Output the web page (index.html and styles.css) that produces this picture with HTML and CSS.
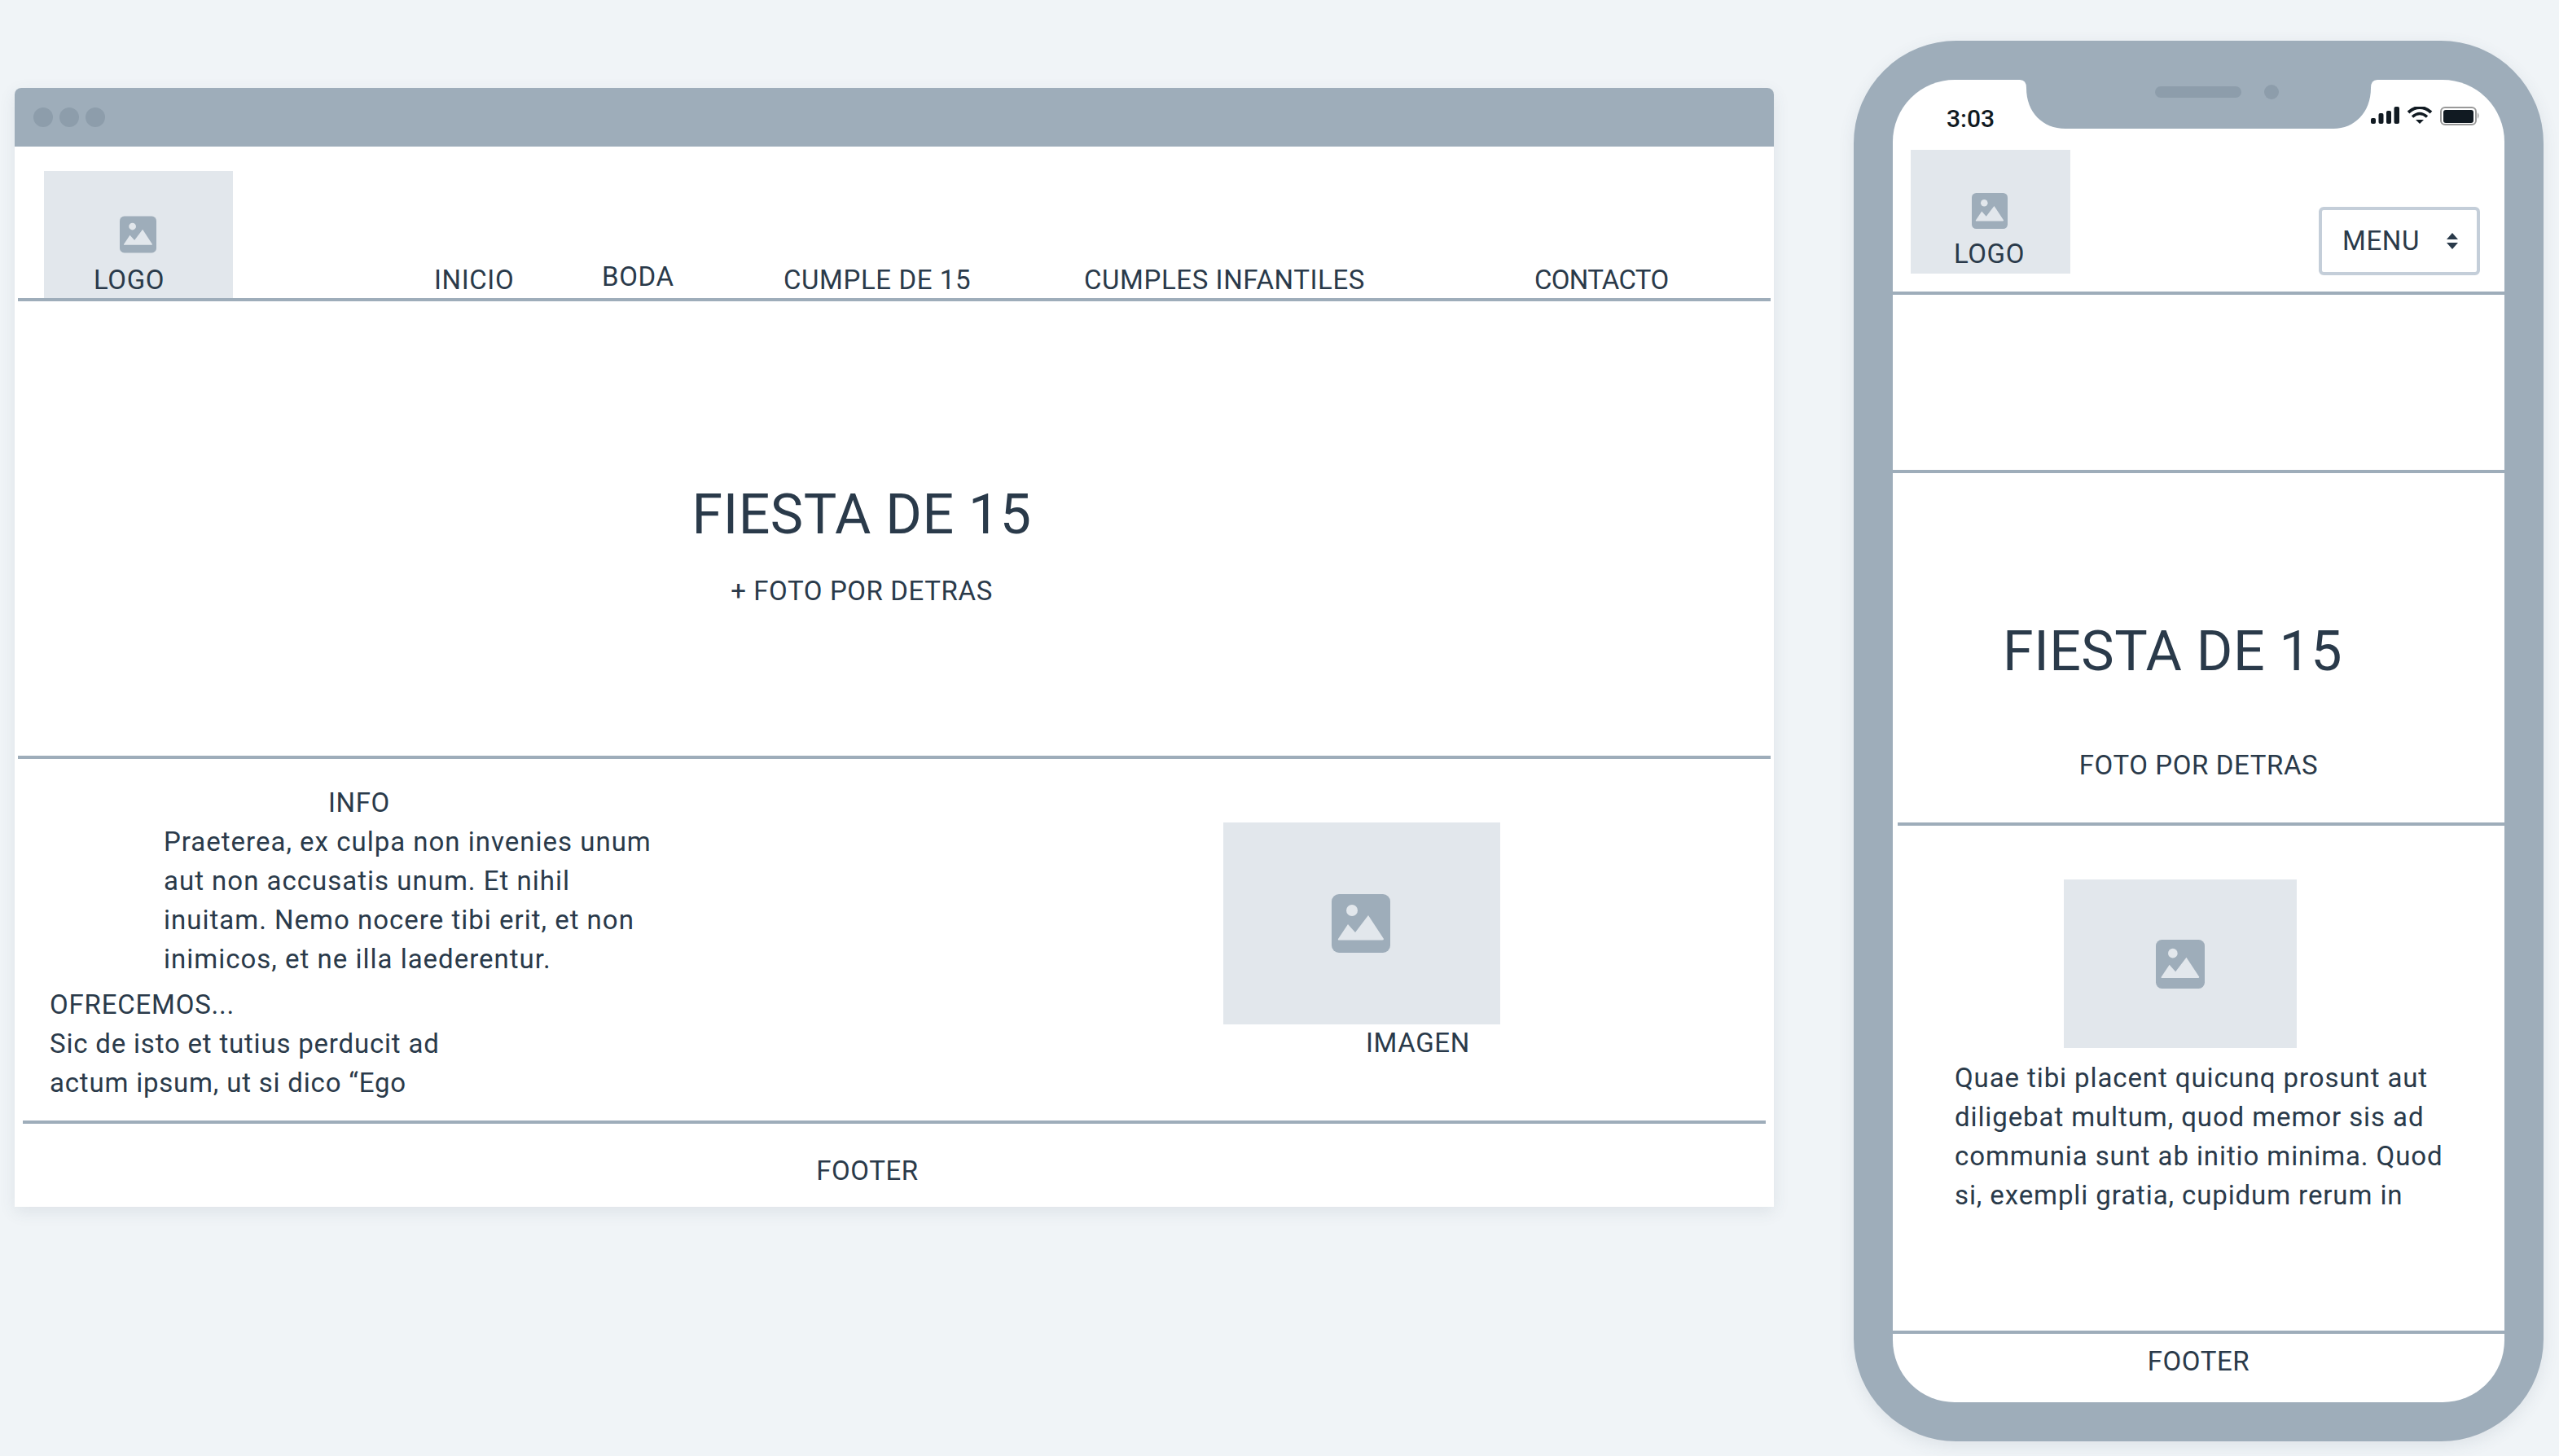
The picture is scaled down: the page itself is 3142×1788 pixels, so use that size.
FILE: index.html
```html
<!DOCTYPE html>
<html lang="en">
<head>
    <meta charset="UTF-8">
    <meta name="viewport" content="width=device-width, initial-scale=1.0">
    <title>Fiesta de 15 wireframe</title>
    <link rel="stylesheet" href="styles.css">
</head>
<body>
    <svg class="defs" width="0" height="0">
        <symbol id="img-icon" viewBox="0 0 72 72">
            <rect width="72" height="72" rx="9" fill="#9eadba"/>
            <circle cx="25" cy="20" r="7" fill="#e2e7ec"/>
            <path d="M8 55 L20 37 L29 47 L45 26 L64 55 Q64 56.500 62 56.500 H10 Q7 56.500 8 55 Z" fill="#e2e7ec"/>
        </symbol>
    </svg>

    <div class="browser">
        <div class="browser-bar">
            <span class="dot"></span>
            <span class="dot"></span>
            <span class="dot"></span>
        </div>
        <header class="site-header">
            <div class="logo">
                <svg class="logo-icon"><use href="#img-icon"/></svg>
                <span class="logo-label">LOGO</span>
            </div>
            <span class="nav-item">INICIO</span>
            <span class="nav-item nav-raised">BODA</span>
            <span class="nav-item">CUMPLE DE 15</span>
            <span class="nav-item">CUMPLES INFANTILES</span>
            <span class="nav-item nav-tight">CONTACTO</span>
        </header>
        <div class="rule"></div>
        <section class="hero">
            <h1>FIESTA DE 15</h1>
            <p>+ FOTO POR DETRAS</p>
        </section>
        <div class="rule"></div>
        <section class="info">
            <div class="info-text">
                <p class="info-title">INFO</p>
                <p class="info-body">Praeterea, ex culpa non invenies unum<br>aut non accusatis unum. Et nihil<br>inuitam. Nemo nocere tibi erit, et non<br>inimicos, et ne illa laederentur.</p>
                <p class="info-offer">OFRECEMOS...<br>Sic de isto et tutius perducit ad<br>actum ipsum, ut si dico “Ego</p>
            </div>
            <div class="info-image">
                <div class="placeholder">
                    <svg class="placeholder-icon"><use href="#img-icon"/></svg>
                </div>
                <p class="image-label">IMAGEN</p>
            </div>
        </section>
        <div class="rule rule-short"></div>
        <footer class="site-footer">FOOTER</footer>
    </div>

    <div class="phone">
        <div class="screen">
            <svg class="notch" viewBox="0 0 439 60">
                <path d="M0 0 H439 Q431 0 431 10 C431 40 411 60 385 60 H56 C28 60 8 40 8 10 Q8 0 0 0 Z" fill="#9eadba"/>
                <rect x="166" y="8" width="106" height="14" rx="7" fill="#8d9dab"/>
                <circle cx="309" cy="15" r="9" fill="#8d9dab"/>
            </svg>
            <div class="status-bar">
                <span class="time">3:03</span>
                <svg class="status-icons" viewBox="0 0 134 24">
                    <rect x="0" y="14" width="6" height="7" rx="2" fill="#111a22"/>
                    <rect x="9.500" y="8" width="6" height="13" rx="2" fill="#111a22"/>
                    <rect x="19" y="5" width="6" height="16" rx="2" fill="#111a22"/>
                    <rect x="28.500" y="0" width="6.500" height="21" rx="2" fill="#111a22"/>
                    <path d="M46 7 Q60 -5 74 7" fill="none" stroke="#111a22" stroke-width="4"/>
                    <path d="M51 12.500 Q60 4.500 69 12.500" fill="none" stroke="#111a22" stroke-width="3.500"/>
                    <path d="M55 16 H65 L60 21 Z" fill="#111a22"/>
                    <rect x="86" y="1" width="43" height="21" rx="5" fill="none" stroke="#999" stroke-width="2"/>
                    <rect x="89" y="4" width="37" height="16" rx="3" fill="#111a22"/>
                    <path d="M131 7 Q134 11 131 15 Z" fill="#999"/>
                </svg>
            </div>
            <div class="phone-header">
                <div class="phone-logo">
                    <svg class="phone-logo-icon"><use href="#img-icon"/></svg>
                    <span>LOGO</span>
                </div>
                <div class="menu">
                    <span>MENU</span>
                    <svg class="menu-arrows" viewBox="0 0 14 20">
                        <path d="M7 0 L14 8 H0 Z M0 12 H14 L7 20 Z" fill="#2a3a4a"/>
                    </svg>
                </div>
            </div>
            <div class="rule-full"></div>
            <div class="phone-banner"></div>
            <div class="rule-full"></div>
            <section class="phone-hero">
                <h1>FIESTA DE 15</h1>
                <p>FOTO POR DETRAS</p>
            </section>
            <div class="rule-full rule-inset"></div>
            <section class="phone-info">
                <div class="phone-image">
                    <svg class="phone-image-icon"><use href="#img-icon"/></svg>
                </div>
                <p>Quae tibi placent quicunq prosunt aut<br>diligebat multum, quod memor sis ad<br>communia sunt ab initio minima. Quod<br>si, exempli gratia, cupidum rerum in</p>
            </section>
            <div class="rule-full"></div>
            <footer class="phone-footer">FOOTER</footer>
        </div>
    </div>
</body>
</html>
```

FILE: styles.css
```css
body, html {
    margin: 0;
    padding: 0;
    height: 100%;
    overflow: hidden;
}
body {
    display: flex;
    align-items: flex-start;
    background-color: #f0f4f7;
    color: #2a3a4a;
    font-family: Roboto, Arial, sans-serif;
    font-size: 33px;
    line-height: 48px;
    letter-spacing: 0.6px;
}
p, h1 {
    margin: 0;
    font-weight: normal;
}
.defs {
    position: absolute;
}
.browser {
    width: 2160px;
    height: 1374px;
    margin: 108px 0 0 18px;
    flex-shrink: 0;
    background-color: #ffffff;
    border-radius: 8px 8px 0 0;
    box-shadow: 0 6px 20px rgba(60, 80, 100, 0.1);
}
.browser-bar {
    display: flex;
    align-items: center;
    gap: 8px;
    height: 72px;
    padding-left: 23px;
    background-color: #9eadba;
    border-radius: 8px 8px 0 0;
}
.dot {
    width: 24px;
    height: 24px;
    border-radius: 50%;
    background-color: #8d9dab;
}
.site-header {
    display: grid;
    grid-template-columns: 479px 206px 223px 369px 553px auto;
    align-items: end;
    height: 156px;
    padding: 30px 0 0 36px;
    line-height: 44px;
}
.logo {
    display: flex;
    flex-direction: column;
    width: 232px;
    height: 156px;
    box-sizing: border-box;
    padding: 55px 0 0 61px;
    background-color: #e2e7ec;
}
.logo-icon {
    width: 45px;
    height: 46px;
    margin-left: 32px;
}
.logo-label {
    margin-top: 11px;
}
.nav-raised {
    padding-bottom: 4px;
}
.nav-tight {
    letter-spacing: -0.7px;
}
.rule {
    height: 4px;
    margin: 0 4px;
    background-color: #9eadba;
}
.rule-short {
    margin: 0 10px;
}
.hero {
    display: flex;
    flex-direction: column;
    align-items: center;
    height: 558px;
    box-sizing: border-box;
    padding: 222px 80px 0 0;
}
.hero h1, .phone-hero h1 {
    font-size: 68px;
    line-height: 80px;
    letter-spacing: 0.5px;
}
.hero p {
    margin-top: 30px;
}
.info {
    display: flex;
    height: 444px;
}
.info-text {
    width: 1484px;
    box-sizing: border-box;
    padding: 30px 0 0 43px;
}
.info-title {
    padding-left: 342px;
}
.info-body {
    padding-left: 140px;
    letter-spacing: 1px;
}
.info-offer {
    margin-top: 8px;
    letter-spacing: 0.8px;
}
.info-image {
    padding-top: 78px;
}
.placeholder {
    display: flex;
    align-items: center;
    justify-content: center;
    width: 340px;
    height: 248px;
    background-color: #e2e7ec;
}
.placeholder-icon {
    width: 72px;
    height: 72px;
    margin-left: -2px;
}
.image-label {
    margin: -1px 0 0 175px;
}
.site-footer {
    padding: 34px 66px 0 0;
    text-align: center;
}
.phone {
    width: 847px;
    height: 1720px;
    margin: 50px 0 0 98px;
    flex-shrink: 0;
    box-sizing: border-box;
    border: solid #9eadba;
    border-width: 48px;
    border-radius: 126px;
    background-color: #9eadba;
    box-shadow: 0 6px 20px rgba(60, 80, 100, 0.1);
}
.screen {
    position: relative;
    height: 1624px;
    background-color: #ffffff;
    border-radius: 76px;
    overflow: hidden;
}
.notch {
    position: absolute;
    left: 156px;
    top: 0;
    width: 439px;
    height: 60px;
}
.status-bar {
    display: flex;
    justify-content: space-between;
    height: 86px;
    box-sizing: border-box;
    padding: 33px 30px 0 66px;
}
.time {
    color: #111a22;
    font-size: 30px;
    font-weight: 500;
    line-height: 30px;
    letter-spacing: 0;
}
.status-icons {
    width: 134px;
    height: 24px;
}
.phone-header {
    display: flex;
    justify-content: space-between;
    height: 174px;
    padding: 0 30px 0 22px;
}
.phone-logo {
    display: flex;
    flex-direction: column;
    align-items: center;
    width: 196px;
    height: 152px;
    box-sizing: border-box;
    padding: 53px 3px 0 0;
    background-color: #e2e7ec;
    line-height: 44px;
}
.phone-logo-icon {
    width: 44px;
    height: 44px;
    margin-bottom: 9px;
}
.menu {
    display: flex;
    align-items: center;
    justify-content: space-between;
    width: 198px;
    height: 84px;
    box-sizing: border-box;
    margin-top: 70px;
    padding: 0 23px 0 25px;
    border: 4px solid #c4ced9;
    border-radius: 6px;
}
.menu-arrows {
    width: 14px;
    height: 20px;
}
.rule-full {
    height: 4px;
    background-color: #9eadba;
}
.rule-inset {
    margin-left: 6px;
}
.phone-banner {
    height: 215px;
}
.phone-hero {
    height: 429px;
    box-sizing: border-box;
    padding-top: 179px;
    text-align: center;
}
.phone-hero h1 {
    padding-right: 64px;
}
.phone-hero p {
    margin-top: 76px;
}
.phone-info {
    height: 620px;
    box-sizing: border-box;
    padding: 66px 0 0 76px;
    letter-spacing: 0.9px;
}
.phone-info p {
    margin-top: 13px;
}
.phone-image {
    display: flex;
    align-items: center;
    justify-content: center;
    width: 286px;
    height: 207px;
    margin-left: 134px;
    background-color: #e2e7ec;
}
.phone-image-icon {
    width: 60px;
    height: 60px;
}
.phone-footer {
    padding-top: 10px;
    text-align: center;
}
```
